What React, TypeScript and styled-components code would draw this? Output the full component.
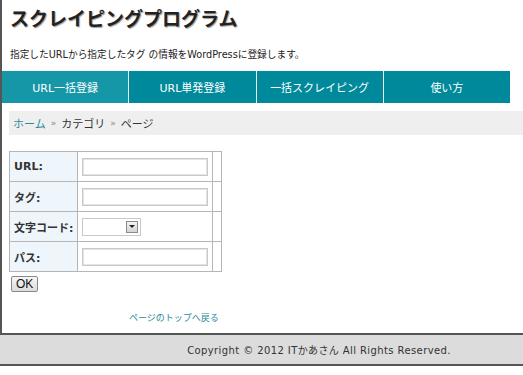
import React from 'react';
import styled, { createGlobalStyle } from 'styled-components';

const GlobalStyle = createGlobalStyle`
  html, body {
    margin: 0;
    padding: 0;
    background: #fff;
    overflow: hidden;
  }
  body {
    font-family: "DejaVu Sans", "Noto Sans CJK JP", sans-serif;
    color: #333;
  }
`;

const Page = styled.div`
  border-left: 2px solid #555;
  box-sizing: border-box;
`;

const Header = styled.header`
  padding: 5px 0 0 8px;
  height: 69px;
  box-sizing: border-box;
`;

const Title = styled.h1`
  margin: 0;
  font-size: 19px;
  line-height: 26px;
  font-weight: bold;
  color: #222;
  text-shadow: 1px 1px 1px #999;
  font-family: "Noto Sans CJK JP", sans-serif;
`;

const Description = styled.p`
  margin: 17px 0 0;
  font-size: 9.7px;
  line-height: 14px;
  color: #222;
`;

const Nav = styled.nav`
  display: flex;
  width: 508px;
  height: 32px;
  margin-top: 2px;
`;

const NavItem = styled.a<{ $active?: boolean }>`
  flex: 1;
  display: flex;
  align-items: center;
  justify-content: center;
  background: ${p => (p.$active ? '#1697a8' : '#00899b')};
  color: #fff;
  font-size: 11px;
  text-decoration: none;
  border-right: 1px solid #e6f4f6;
  &:last-child {
    border-right: none;
  }
`;

const Breadcrumb = styled.div`
  margin: 8px 0 0 7px;
  height: 24px;
  background: #efefef;
  display: flex;
  align-items: center;
  padding-left: 4px;
  font-size: 11px;
  color: #333;
`;

const Crumb = styled.a`
  color: #2a8c9b;
  text-decoration: none;
`;

const Sep = styled.span`
  color: #888;
  font-size: 9px;
  margin: 0 5px;
`;

const FormArea = styled.form`
  margin: 16px 0 0 7px;
`;

const Table = styled.table`
  border-collapse: collapse;
  border: 1px solid #b5b5b5;
`;

const Row = styled.tr`
  height: 30px;
`;

const Label = styled.th`
  width: 58px;
  padding: 0 4px;
  text-align: left;
  font-size: 11px;
  font-weight: bold;
  color: #333;
  background: #eef5fb;
  border: 1px solid #b5b5b5;
  white-space: nowrap;
`;

const Field = styled.td`
  width: 126px;
  padding: 0 4px;
  border: 1px solid #b5b5b5;
`;

const Spacer = styled.td`
  width: 8px;
  padding: 0;
  border: 1px solid #b5b5b5;
`;

const TextInput = styled.input`
  display: block;
  width: 126px;
  height: 18px;
  box-sizing: border-box;
  border: 1px solid #c8c8c8;
  box-shadow: inset 0 0 0 1px #e4e4e4;
  padding: 0 2px;
  font-size: 11px;
  background: #fff;
`;

const SelectBox = styled.div`
  display: flex;
  justify-content: flex-end;
  width: 59px;
  height: 18px;
  box-sizing: border-box;
  border: 1px solid #c8c8c8;
  padding: 2px;
  background: #fff;
`;

const ArrowButton = styled.span`
  width: 12px;
  height: 12px;
  box-sizing: border-box;
  border: 1px solid #8a8a8a;
  background: linear-gradient(#f4f4f4, #d4d4d4);
  display: flex;
  align-items: center;
  justify-content: center;
  &::after {
    content: '';
    border-left: 3px solid transparent;
    border-right: 3px solid transparent;
    border-top: 3px solid #222;
  }
`;

const OkButton = styled.button`
  margin: 4px 0 0 2px;
  height: 16px;
  padding: 0 4px;
  font-family: "Liberation Sans", sans-serif;
  font-size: 12px;
  line-height: 12px;
  color: #111;
  border: 1px solid #888;
  border-radius: 2px;
  background: linear-gradient(#f6f6f6, #dcdcdc);
`;

const BackToTop = styled.div`
  padding: 19px 0 0 127px;
  height: 41px;
  box-sizing: border-box;
  font-size: 9px;
`;

const BackLink = styled.a`
  color: #2a8c9b;
  text-decoration: none;
`;

const Footer = styled.footer`
  margin-left: -2px;
  height: 33px;
  box-sizing: border-box;
  border-top: 2px solid #555;
  border-bottom: 2px solid #555;
  background: #dcdcdc;
  display: flex;
  align-items: center;
  justify-content: center;
  padding-left: 115px;
  font-size: 10px;
  letter-spacing: 0.4px;
  color: #333;
`;

const fields = [
  { label: 'URL:', kind: 'text' },
  { label: 'タグ:', kind: 'text' },
  { label: '文字コード:', kind: 'select' },
  { label: 'パス:', kind: 'text' },
];

const App = () => {
  return (
    <Page>
      <GlobalStyle />
      <Header>
        <Title>スクレイピングプログラム</Title>
        <Description>指定したURLから指定したタグ の情報をWordPressに登録します。</Description>
      </Header>
      <Nav>
        <NavItem $active>URL一括登録</NavItem>
        <NavItem>URL単発登録</NavItem>
        <NavItem>一括スクレイピング</NavItem>
        <NavItem>使い方</NavItem>
      </Nav>
      <Breadcrumb>
        <Crumb>ホーム</Crumb>
        <Sep>»</Sep>
        <span>カテゴリ</span>
        <Sep>»</Sep>
        <span>ページ</span>
      </Breadcrumb>
      <FormArea>
        <Table>
          <tbody>
            {fields.map(f => (
              <Row key={f.label}>
                <Label>{f.label}</Label>
                <Field>
                  {f.kind === 'select' ? (
                    <SelectBox>
                      <ArrowButton />
                    </SelectBox>
                  ) : (
                    <TextInput type="text" />
                  )}
                </Field>
                <Spacer />
              </Row>
            ))}
          </tbody>
        </Table>
        <OkButton type="button">OK</OkButton>
      </FormArea>
      <BackToTop>
        <BackLink>ページのトップへ戻る</BackLink>
      </BackToTop>
      <Footer>Copyright © 2012 ITかあさん All Rights Reserved.</Footer>
    </Page>
  );
};

export default App;
